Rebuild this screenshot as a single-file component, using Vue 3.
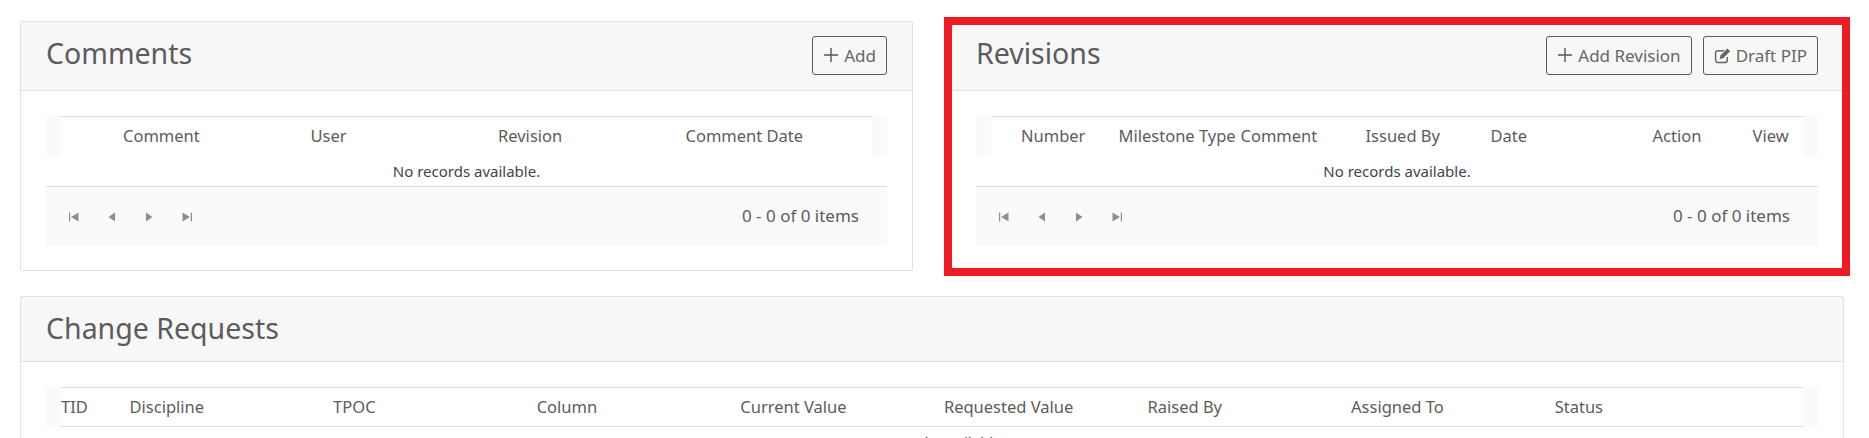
<script setup>
const commentColumns = ["Comment", "User", "Revision", "Comment Date"];

// widths read off the header, this grid has uneven columns
const revisionColumns = [
  { label: "Number", width: "97.5px" },
  { label: "Milestone Type", width: "122px" },
  { label: "Comment", width: "125px" },
  { label: "Issued By", width: "125px" },
  { label: "Date", width: "162px" },
  { label: "Action", width: "100px" },
  { label: "View", width: "50px" },
];

const changeColumns = [
  "TID",
  "Discipline",
  "TPOC",
  "Column",
  "Current Value",
  "Requested Value",
  "Raised By",
  "Assigned To",
  "Status",
];

const revisionTemplate = revisionColumns.map((c) => c.width).join(" ");
</script>

<template>
  <div class="page">
    <div class="top-row">
      <section class="panel">
        <header class="panel-head">
          <h2>Comments</h2>
          <div class="actions">
            <button class="btn">
              <svg class="plus" viewBox="0 0 16 16"><path d="M8 1v14M1 8h14" /></svg>
              Add
            </button>
          </div>
        </header>
        <div class="panel-body">
          <div class="grid">
            <div class="grid-head">
              <div class="head-row comment-cols">
                <span v-for="col in commentColumns" :key="col">{{ col }}</span>
              </div>
            </div>
            <div class="no-records">No records available.</div>
            <div class="pager">
              <div class="pager-nav">
                <svg viewBox="0 0 12 12"><path d="M1 1.5h1.2v9H1zM10.5 1.5v9L3 6z" /></svg>
                <svg viewBox="0 0 12 12"><path d="M9 1.5v9L2.5 6z" /></svg>
                <svg viewBox="0 0 12 12"><path d="M3 1.5v9L9.5 6z" /></svg>
                <svg viewBox="0 0 12 12"><path d="M9.8 1.5H11v9H9.8zM1.5 1.5v9L9 6z" /></svg>
              </div>
              <span class="pager-info">0 - 0 of 0 items</span>
            </div>
          </div>
        </div>
      </section>

      <section class="panel highlighted">
        <header class="panel-head">
          <h2>Revisions</h2>
          <div class="actions">
            <button class="btn">
              <svg class="plus" viewBox="0 0 16 16"><path d="M8 1v14M1 8h14" /></svg>
              Add Revision
            </button>
            <button class="btn">
              <svg class="edit" viewBox="0 0 16 16">
                <path class="edit-box" d="M12.5 9.5v3a2 2 0 0 1-2 2h-7a2 2 0 0 1-2-2v-7a2 2 0 0 1 2-2h6" />
                <path class="edit-pen" d="M6 8 12.6 1.4l2.6 2.6L8.6 10.6 5.4 11.2z" />
              </svg>
              Draft PIP
            </button>
          </div>
        </header>
        <div class="panel-body">
          <div class="grid">
            <div class="grid-head">
              <div class="head-row revision-cols" :style="{ gridTemplateColumns: revisionTemplate }">
                <span v-for="col in revisionColumns" :key="col.label">{{ col.label }}</span>
              </div>
            </div>
            <div class="no-records">No records available.</div>
            <div class="pager">
              <div class="pager-nav">
                <svg viewBox="0 0 12 12"><path d="M1 1.5h1.2v9H1zM10.5 1.5v9L3 6z" /></svg>
                <svg viewBox="0 0 12 12"><path d="M9 1.5v9L2.5 6z" /></svg>
                <svg viewBox="0 0 12 12"><path d="M3 1.5v9L9.5 6z" /></svg>
                <svg viewBox="0 0 12 12"><path d="M9.8 1.5H11v9H9.8zM1.5 1.5v9L9 6z" /></svg>
              </div>
              <span class="pager-info">0 - 0 of 0 items</span>
            </div>
          </div>
        </div>
        <div class="red-box"></div>
      </section>
    </div>

    <section class="panel wide">
      <header class="panel-head short">
        <h2>Change Requests</h2>
      </header>
      <div class="panel-body">
        <div class="grid">
          <div class="grid-head">
            <div class="head-row change-cols">
              <span v-for="col in changeColumns" :key="col">{{ col }}</span>
            </div>
          </div>
          <div class="no-records">No records available.</div>
        </div>
      </div>
    </section>
  </div>
</template>

<style>
html,
body {
  overflow: hidden;
  background: #fff;
}
</style>

<style scoped>
.page {
  padding: 21px 25px 0 20px;
  font-family: "Noto Sans", "Open Sans", sans-serif;
  font-size: 16.5px;
  color: #5c5c5c;
}

.top-row {
  display: grid;
  grid-template-columns: 893px 894px;
  gap: 37px;
  margin-bottom: 25px;
}

.panel {
  position: relative;
  background: #fff;
  border: 1px solid #e2e2e2;
  border-radius: 2px;
  height: 248px;
}

.panel.wide {
  height: auto;
}

.panel-head {
  display: flex;
  justify-content: space-between;
  align-items: center;
  height: 68px;
  padding: 0 25px;
  background: #f7f7f7;
  border-bottom: 1px solid #e0e0e0;
}

.panel-head.short {
  height: 64px;
}

.panel-head h2 {
  margin: -7px 0 0;
  font-size: 28.5px;
  font-weight: 400;
  line-height: 36px;
  color: #5c5c5c;
}

.panel-head.short h2 {
  margin-top: -2px;
}

.actions {
  display: flex;
  gap: 11px;
  margin-top: -2px;
}

.btn {
  display: flex;
  align-items: center;
  gap: 5px;
  height: 39px;
  padding: 0 10px;
  background: transparent;
  border: 1px solid #5a5a5a;
  border-radius: 3px;
  font-family: inherit;
  font-size: 17px;
  color: #666;
}

.plus {
  width: 16px;
  height: 16px;
  fill: none;
  stroke: #555;
  stroke-width: 1.4;
}

.edit {
  width: 17px;
  height: 17px;
}

.edit-box {
  fill: none;
  stroke: #666;
  stroke-width: 1.4;
}

.edit-pen {
  fill: #666;
}

.panel-body {
  padding: 25px 25px 0;
}

.grid-head {
  padding: 0 15px;
  background: #fafafa;
}

.head-row {
  display: grid;
  align-items: center;
  height: 40px;
  padding-bottom: 2px;
  box-sizing: border-box;
  background: #fff;
  border-top: 1px solid #ddd;
}

.comment-cols {
  grid-template-columns: repeat(4, 187.5px);
  padding-left: 62px;
}

.revision-cols {
  padding-left: 30px;
}

.change-cols {
  grid-template-columns: 68.5px repeat(8, 203.6px);
  border-bottom: 1px solid #ddd;
}

.no-records {
  height: 30px;
  line-height: 30px;
  text-align: center;
  font-size: 15px;
  color: #444;
  border-bottom: 1px solid #ddd;
}

.pager {
  display: flex;
  justify-content: space-between;
  align-items: center;
  height: 59px;
  padding: 0 28px 2px 22px;
  box-sizing: border-box;
  background: #fafafa;
  font-size: 17px;
}

.pager-nav {
  display: flex;
  gap: 25.5px;
  margin-top: 2px;
}

.pager-nav svg {
  width: 12px;
  height: 12px;
  fill: #8f8f8f;
}

.red-box {
  position: absolute;
  inset: -5px -7px -6px -7px;
  border: 8px solid #ed1c24;
  pointer-events: none;
}
</style>
